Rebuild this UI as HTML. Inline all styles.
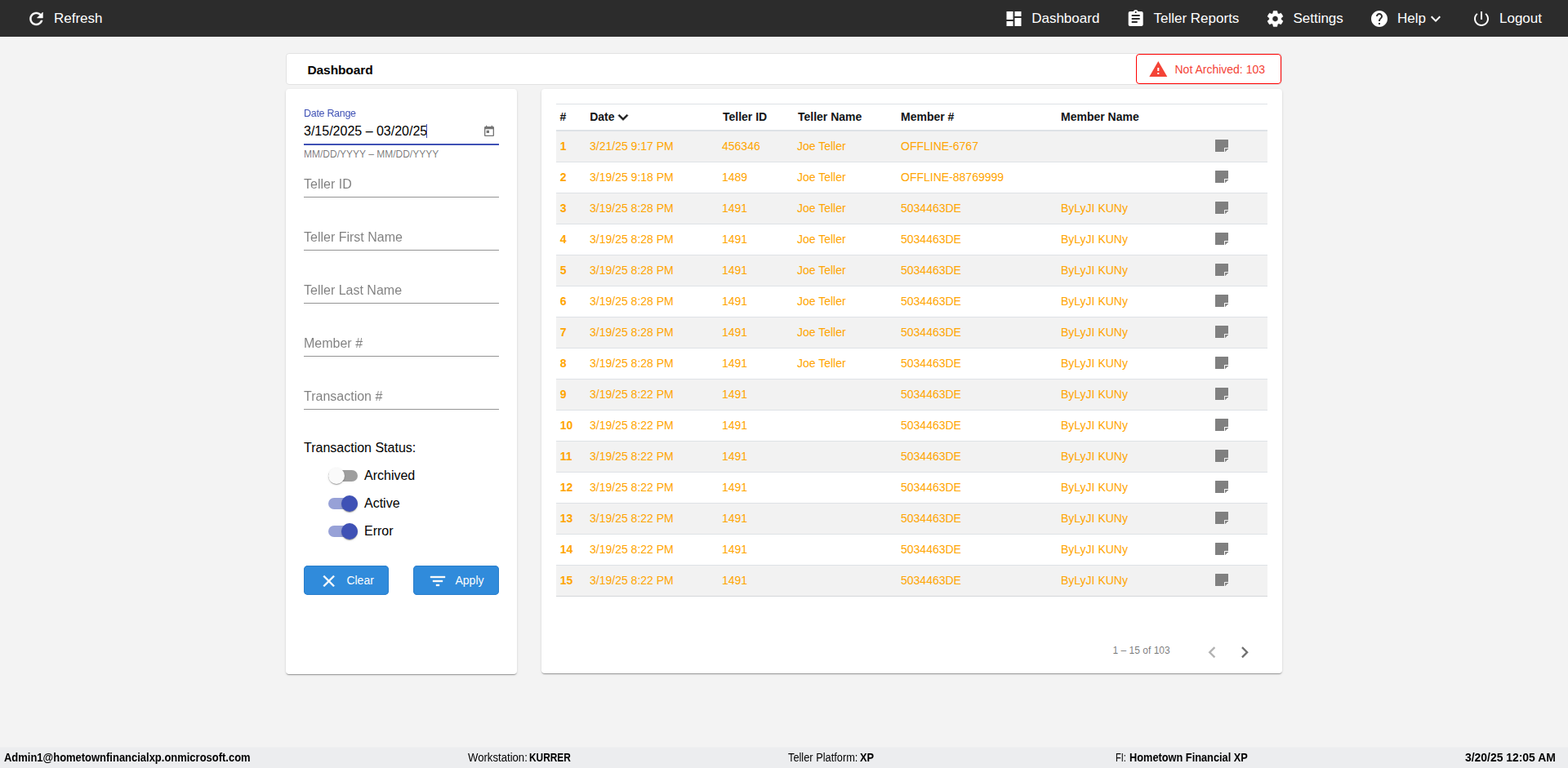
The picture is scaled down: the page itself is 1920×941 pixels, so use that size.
<!DOCTYPE html>
<html lang="en">
<head>
<meta charset="utf-8">
<title>Dashboard</title>
<style>
*{box-sizing:border-box}
svg{overflow:visible}
html,body{margin:0;padding:0}
body{width:1920px;height:941px;overflow:hidden;background:#f3f3f3;font-family:"Liberation Sans",sans-serif;color:#212529;position:relative}
#nav{position:absolute;left:0;top:0;width:1920px;height:45px;background:#2c2c2c;color:#fff;font-size:17px;line-height:45px}
#nav .it{position:absolute;top:0;height:45px;white-space:nowrap}
#nav svg{position:absolute;fill:#fff;stroke:#fff;stroke-width:0;stroke-linejoin:round}
#title{position:absolute;left:350px;top:65px;width:1220px;height:39px;background:#fff;border:1px solid #e2e2e2;border-radius:4px}
#title b{position:absolute;left:25.500px;top:1px;line-height:38px;font-size:15.500px;letter-spacing:-0.1px;color:#000}
#badge{position:absolute;left:1391px;top:66px;width:178px;height:37px;border:1px solid #f00;border-radius:4px;background:#fff;color:#f44336;font-size:14px}
#badge svg{position:absolute;fill:#f44336}
#badge span{position:absolute;left:46.500px;top:1px;line-height:35px;white-space:nowrap}
.card{position:absolute;background:#fff;border-radius:4px;box-shadow:0 2px 1px -1px rgba(0,0,0,.2),0 1px 1px 0 rgba(0,0,0,.14),0 1px 3px 0 rgba(0,0,0,.12)}
#left{left:350px;top:109px;width:283px;height:717px}
#right{left:663px;top:109px;width:907px;height:716px}
/* form */
.fld{position:absolute;left:22px;width:239px;height:40px}
.fl{position:absolute;left:0;top:15px;font-size:16px;line-height:18px;will-change:transform;color:rgba(0,0,0,.5);white-space:nowrap}
.ul{position:absolute;left:0;right:0;bottom:0;height:1px;background:rgba(0,0,0,.42)}
#dr-l{position:absolute;left:22px;top:21px;font-size:12.500px;letter-spacing:-.3px;line-height:14px;color:#3f51b5;white-space:nowrap;padding:2px 4px 4px 0;filter:blur(.3px)}
#dr-v{position:absolute;left:22px;top:42.500px;font-size:16px;line-height:18px;color:#000;white-space:nowrap}
#dr-c{position:absolute;left:172px;top:43px;width:1px;height:17px;background:#3f51b5}
#dr-u{position:absolute;left:22px;top:67px;width:239px;height:2px;background:#3f51b5}
#dr-h{position:absolute;left:22px;top:73px;font-size:12px;line-height:14px;color:rgba(0,0,0,.54);white-space:nowrap}
#dr-i{position:absolute;left:241px;top:44px;fill:rgba(0,0,0,.54)}
#ts{position:absolute;left:22px;top:431px;font-size:16px;line-height:18px;color:#000;white-space:nowrap}
.tg{position:absolute;left:52px;height:20px;width:200px}
.tg .bar{position:absolute;left:0;top:3px;width:36px;height:14px;border-radius:8px;background:rgba(0,0,0,.38)}
.tg .th{position:absolute;left:0;top:0;width:20px;height:20px;border-radius:50%;background:#fafafa;box-shadow:0 2px 1px -1px rgba(0,0,0,.2),0 1px 1px 0 rgba(0,0,0,.14),0 1px 3px 0 rgba(0,0,0,.12)}
.tg.on .bar{background:rgba(63,81,181,.54)}
.tg.on .th{left:16px;background:#3f51b5}
.tg span{position:absolute;left:44px;top:0;font-size:16px;line-height:20px;color:#000;white-space:nowrap}
.btn{position:absolute;top:584px;height:36px;border-radius:5px;background:#308bdb;color:#fdfdfd;font-size:14px;line-height:36px;box-shadow:inset 0 0 0 1px #2a7ecb}
.btn svg{position:absolute;fill:#fbfbfb;stroke:#fbfbfb;stroke-width:.35}
.btn span{position:absolute;top:0;white-space:nowrap}
/* table */
table{position:absolute;left:18px;top:18px;width:871px;border-collapse:separate;border-spacing:0;table-layout:fixed;font-size:14px;line-height:21px}
th{text-align:left;font-weight:bold;color:#121416;height:34px;padding:0 0 0 5px;border-top:1px solid #dee2e6;border-bottom:2px solid #dee2e6;vertical-align:middle;white-space:nowrap}
td{height:38px;padding:0 0 0 4px;border-bottom:1px solid #dee2e6;color:#ffa500;vertical-align:middle;white-space:nowrap}
tbody tr:nth-child(odd) td{background:#f2f2f2}
td.c0{font-weight:bold;padding-left:4.700px}
tbody tr:last-child td{border-bottom-color:#d4d6d9}
td.ci{padding:0}
.note{display:block;fill:#808080;margin-left:4px;margin-top:-2px}
th svg{position:absolute}
#pg{position:absolute;right:18px;top:661px;height:56px;width:300px;color:rgba(0,0,0,.54);font-size:12px}
#pg span{position:absolute;left:110.600px;top:-1px;line-height:56px;white-space:nowrap}
#pg svg{position:absolute}
/* footer */
#foot{position:absolute;left:0;top:915px;width:1920px;height:26px;background:#ecedef;box-shadow:inset 0 1px 0 #f0f0f1;font-size:13.800px;line-height:26.400px;color:#000}
#foot b,#foot span{position:absolute;top:1px;white-space:nowrap;transform-origin:0 50%}
</style>
</head>
<body>
<div id="nav">
  <svg viewBox="0 0 24 24" width="24" height="24" style="left:32px;top:11px;stroke-width:.5"><g transform="translate(0.4 0)"><path d="M17.65 6.35C16.2 4.9 14.21 4 12 4c-4.42 0-7.99 3.58-7.99 8s3.570 8 7.990 8c3.730 0 6.840-2.550 7.730-6h-2.080c-.82 2.330-3.040 4-5.650 4-3.310 0-6-2.690-6-6s2.690-6 6-6c1.660 0 3.140.690 4.220 1.780L13 11h7V4l-2.350 2.350z"/></g></svg>
  <div class="it" style="left:66px">Refresh</div>
  <svg viewBox="0 0 24 24" width="24" height="24" style="left:1229px;top:11px"><g transform="translate(0.5 0)"><path d="M3 13h8V3H3v10zm0 8h8v-6H3v6zm10 0h8V11h-8v10zm0-18v6h8V3h-8z"/></g></svg>
  <div class="it" style="left:1263.200px">Dashboard</div>
  <svg viewBox="0 0 24 24" width="24" height="24" style="left:1378px;top:11px"><g transform="translate(0.7 0)"><path d="M19 3h-4.180C14.400 1.840 13.300 1 12 1c-1.300 0-2.400.840-2.820 2H5c-1.100 0-2 .9-2 2v14c0 1.100.9 2 2 2h14c1.100 0 2-.9 2-2V5c0-1.100-.9-2-2-2zm-7 0c.550 0 1 .450 1 1s-.450 1-1 1-1-.450-1-1 .450-1 1-1zm2 14H7v-2h7v2zm3-4H7v-2h10v2zm0-4H7V7h10v2z"/></g></svg>
  <div class="it" style="left:1412.500px">Teller Reports</div>
  <svg viewBox="0 0 24 24" width="24" height="24" style="left:1549px;top:11px;stroke-width:.6"><g transform="translate(0.5 0)"><path d="M19.140 12.940c.040-.3.060-.610.060-.940 0-.320-.020-.640-.070-.940l2.030-1.580c.180-.140.230-.410.120-.610l-1.920-3.320c-.120-.220-.370-.290-.590-.220l-2.390.960c-.5-.380-1.030-.7-1.620-.940l-.360-2.540c-.040-.240-.240-.410-.480-.410h-3.840c-.240 0-.430.170-.470.410l-.360 2.540c-.590.240-1.130.570-1.620.940l-2.390-.960c-.220-.080-.470 0-.590.220L2.740 8.870c-.120.210-.080.470.120.610l2.030 1.580c-.050.3-.090.630-.090.940s.020.640.070.940l-2.030 1.580c-.180.140-.230.410-.120.610l1.920 3.320c.120.220.370.290.590.220l2.390-.960c.5.380 1.030.7 1.620.940l.360 2.540c.050.240.240.410.480.410h3.840c.240 0 .440-.170.470-.410l.360-2.540c.590-.240 1.130-.560 1.620-.940l2.390.960c.220.080.470 0 .590-.220l1.920-3.320c.120-.220.070-.470-.120-.610l-2.010-1.580zM12 15.600c-1.980 0-3.600-1.620-3.600-3.600s1.620-3.600 3.600-3.600 3.600 1.620 3.600 3.600-1.620 3.600-3.600 3.600z"/></g></svg>
  <div class="it" style="left:1583.400px">Settings</div>
  <svg viewBox="0 0 24 24" width="24" height="24" style="left:1677px;top:11px"><path d="M12 2C6.480 2 2 6.480 2 12s4.480 10 10 10 10-4.480 10-10S17.520 2 12 2zm1 17h-2v-2h2v2zm2.070-7.750l-.9.920C13.450 12.900 13 13.500 13 15h-2v-.5c0-1.100.450-2.100 1.170-2.830l1.240-1.260c.370-.360.590-.860.590-1.410 0-1.100-.9-2-2-2s-2 .9-2 2H8c0-2.210 1.790-4 4-4s4 1.790 4 4c0 .880-.360 1.680-.930 2.250z"/></svg>
  <div class="it" style="left:1711px">Help</div>
  <svg viewBox="0 0 24 24" width="24" height="24" style="left:1746px;top:11px"><path d="M16.590 8.590L12 13.170 7.410 8.590 6 10l6 6 6-6z"/></svg>
  <svg viewBox="0 0 24 24" width="24" height="24" style="left:1802px;top:11px"><path d="M13 3h-2v10h2V3zm4.830 2.170l-1.420 1.420C17.990 7.860 19 9.810 19 12c0 3.870-3.130 7-7 7s-7-3.130-7-7c0-2.190 1.010-4.140 2.580-5.420L6.170 5.170C4.230 6.820 3 9.260 3 12c0 4.970 4.030 9 9 9s9-4.030 9-9c0-2.740-1.230-5.180-3.170-6.830z"/></svg>
  <div class="it" style="left:1836px">Logout</div>
</div>

<div id="title"><b>Dashboard</b></div>
<div id="badge">
  <svg viewBox="0 0 24 24" width="24" height="24" style="left:14px;top:6px"><g transform="translate(0.3 0)"><path d="M1 21h22L12 2 1 21zm12-3h-2v-2h2v2zm0-4h-2v-4h2v4z"/></g></svg>
  <span>Not Archived: 103</span>
</div>

<div id="left" class="card">
  <div id="dr-l">Date Range</div>
  <div id="dr-v">3/15/2025 – 03/20/25</div>
  <i id="dr-c"></i>
  <svg id="dr-i" viewBox="0 0 24 24" width="16" height="16"><path d="M19 3h-1V1h-2v2H8V1H6v2H5c-1.110 0-1.990.9-1.990 2L3 19c0 1.100.890 2 2 2h14c1.100 0 2-.9 2-2V5c0-1.100-.9-2-2-2zm0 16H5V8h14v11zM7 10h5v5H7z"/></svg>
  <i id="dr-u"></i>
  <div id="dr-h">MM/DD/YYYY – MM/DD/YYYY</div>
  <div class="fld" style="top:93px"><span class="fl">Teller ID</span><i class="ul"></i></div>
  <div class="fld" style="top:158px"><span class="fl">Teller First Name</span><i class="ul"></i></div>
  <div class="fld" style="top:223px"><span class="fl">Teller Last Name</span><i class="ul"></i></div>
  <div class="fld" style="top:288px"><span class="fl">Member #</span><i class="ul"></i></div>
  <div class="fld" style="top:353px"><span class="fl">Transaction #</span><i class="ul"></i></div>
  <div id="ts">Transaction Status:</div>
  <div class="tg" style="top:464px"><i class="bar"></i><i class="th"></i><span>Archived</span></div>
  <div class="tg on" style="top:498px"><i class="bar"></i><i class="th"></i><span>Active</span></div>
  <div class="tg on" style="top:532px"><i class="bar"></i><i class="th"></i><span>Error</span></div>
  <div class="btn" style="left:22px;width:104px">
    <svg viewBox="0 0 24 24" width="24" height="24" style="left:18px;top:7px"><g transform="translate(0.7 0)"><path d="M19 6.410L17.590 5 12 10.590 6.410 5 5 6.410 10.590 12 5 17.590 6.410 19 12 13.410 17.590 19 19 17.590 13.410 12z"/></g></svg>
    <span style="left:52.400px">Clear</span>
  </div>
  <div class="btn" style="left:156px;width:105px">
    <svg viewBox="0 0 24 24" width="24" height="24" style="left:18px;top:7px"><path d="M10 18h4v-2h-4v2zM3 6v2h18V6H3zm3 7h12v-2H6v2z"/></svg>
    <span style="left:51.500px">Apply</span>
  </div>
</div>

<div id="right" class="card">
  <table>
    <colgroup><col style="width:37px"><col style="width:162px"><col style="width:92px"><col style="width:127px"><col style="width:196px"><col style="width:189px"><col style="width:68px"></colgroup>
    <thead><tr><th style="padding-left:4.600px">#</th><th style="padding-left:4.200px;position:relative">Date<svg viewBox="0 0 12 8" width="12" height="8" style="left:39px;top:12px"><g transform="translate(0 0.2)"><path d="M1.410 0L6 4.590 10.590 0 12 1.410l-6 6-6-6z" fill="#1c1c1c" stroke="#1c1c1c" stroke-width=".6"/></g></svg></th><th>Teller ID</th><th>Teller Name</th><th style="padding-left:4px">Member #</th><th style="padding-left:4px">Member Name</th><th></th></tr></thead>
    <tbody>
<tr><td class="c0">1</td><td>3/21/25 9:17 PM</td><td>456346</td><td>Joe Teller</td><td>OFFLINE-6767</td><td></td><td class="ci"><svg class="note" viewBox="0 0 16 15" width="16" height="15"><path d="M.5 0h15a.5.5 0 0 1 .5.5V10h-4.500a.5.5 0 0 0-.5.5V15H.5a.5.5 0 0 1-.5-.5V.5A.5.5 0 0 1 .5 0z"/><path d="M12 11h4v.3l-3.700 3.700H12z"/></svg></td></tr>
<tr><td class="c0">2</td><td>3/19/25 9:18 PM</td><td>1489</td><td>Joe Teller</td><td>OFFLINE-88769999</td><td></td><td class="ci"><svg class="note" viewBox="0 0 16 15" width="16" height="15"><path d="M.5 0h15a.5.5 0 0 1 .5.5V10h-4.500a.5.5 0 0 0-.5.5V15H.5a.5.5 0 0 1-.5-.5V.5A.5.5 0 0 1 .5 0z"/><path d="M12 11h4v.3l-3.700 3.700H12z"/></svg></td></tr>
<tr><td class="c0">3</td><td>3/19/25 8:28 PM</td><td>1491</td><td>Joe Teller</td><td>5034463DE</td><td>ByLyJI KUNy</td><td class="ci"><svg class="note" viewBox="0 0 16 15" width="16" height="15"><path d="M.5 0h15a.5.5 0 0 1 .5.5V10h-4.500a.5.5 0 0 0-.5.5V15H.5a.5.5 0 0 1-.5-.5V.5A.5.5 0 0 1 .5 0z"/><path d="M12 11h4v.3l-3.700 3.700H12z"/></svg></td></tr>
<tr><td class="c0">4</td><td>3/19/25 8:28 PM</td><td>1491</td><td>Joe Teller</td><td>5034463DE</td><td>ByLyJI KUNy</td><td class="ci"><svg class="note" viewBox="0 0 16 15" width="16" height="15"><path d="M.5 0h15a.5.5 0 0 1 .5.5V10h-4.500a.5.5 0 0 0-.5.5V15H.5a.5.5 0 0 1-.5-.5V.5A.5.5 0 0 1 .5 0z"/><path d="M12 11h4v.3l-3.700 3.700H12z"/></svg></td></tr>
<tr><td class="c0">5</td><td>3/19/25 8:28 PM</td><td>1491</td><td>Joe Teller</td><td>5034463DE</td><td>ByLyJI KUNy</td><td class="ci"><svg class="note" viewBox="0 0 16 15" width="16" height="15"><path d="M.5 0h15a.5.5 0 0 1 .5.5V10h-4.500a.5.5 0 0 0-.5.5V15H.5a.5.5 0 0 1-.5-.5V.5A.5.5 0 0 1 .5 0z"/><path d="M12 11h4v.3l-3.700 3.700H12z"/></svg></td></tr>
<tr><td class="c0">6</td><td>3/19/25 8:28 PM</td><td>1491</td><td>Joe Teller</td><td>5034463DE</td><td>ByLyJI KUNy</td><td class="ci"><svg class="note" viewBox="0 0 16 15" width="16" height="15"><path d="M.5 0h15a.5.5 0 0 1 .5.5V10h-4.500a.5.5 0 0 0-.5.5V15H.5a.5.5 0 0 1-.5-.5V.5A.5.5 0 0 1 .5 0z"/><path d="M12 11h4v.3l-3.700 3.700H12z"/></svg></td></tr>
<tr><td class="c0">7</td><td>3/19/25 8:28 PM</td><td>1491</td><td>Joe Teller</td><td>5034463DE</td><td>ByLyJI KUNy</td><td class="ci"><svg class="note" viewBox="0 0 16 15" width="16" height="15"><path d="M.5 0h15a.5.5 0 0 1 .5.5V10h-4.500a.5.5 0 0 0-.5.5V15H.5a.5.5 0 0 1-.5-.5V.5A.5.5 0 0 1 .5 0z"/><path d="M12 11h4v.3l-3.700 3.700H12z"/></svg></td></tr>
<tr><td class="c0">8</td><td>3/19/25 8:28 PM</td><td>1491</td><td>Joe Teller</td><td>5034463DE</td><td>ByLyJI KUNy</td><td class="ci"><svg class="note" viewBox="0 0 16 15" width="16" height="15"><path d="M.5 0h15a.5.5 0 0 1 .5.5V10h-4.500a.5.5 0 0 0-.5.5V15H.5a.5.5 0 0 1-.5-.5V.5A.5.5 0 0 1 .5 0z"/><path d="M12 11h4v.3l-3.700 3.700H12z"/></svg></td></tr>
<tr><td class="c0">9</td><td>3/19/25 8:22 PM</td><td>1491</td><td></td><td>5034463DE</td><td>ByLyJI KUNy</td><td class="ci"><svg class="note" viewBox="0 0 16 15" width="16" height="15"><path d="M.5 0h15a.5.5 0 0 1 .5.5V10h-4.500a.5.5 0 0 0-.5.5V15H.5a.5.5 0 0 1-.5-.5V.5A.5.5 0 0 1 .5 0z"/><path d="M12 11h4v.3l-3.700 3.700H12z"/></svg></td></tr>
<tr><td class="c0">10</td><td>3/19/25 8:22 PM</td><td>1491</td><td></td><td>5034463DE</td><td>ByLyJI KUNy</td><td class="ci"><svg class="note" viewBox="0 0 16 15" width="16" height="15"><path d="M.5 0h15a.5.5 0 0 1 .5.5V10h-4.500a.5.5 0 0 0-.5.5V15H.5a.5.5 0 0 1-.5-.5V.5A.5.5 0 0 1 .5 0z"/><path d="M12 11h4v.3l-3.700 3.700H12z"/></svg></td></tr>
<tr><td class="c0">11</td><td>3/19/25 8:22 PM</td><td>1491</td><td></td><td>5034463DE</td><td>ByLyJI KUNy</td><td class="ci"><svg class="note" viewBox="0 0 16 15" width="16" height="15"><path d="M.5 0h15a.5.5 0 0 1 .5.5V10h-4.500a.5.5 0 0 0-.5.5V15H.5a.5.5 0 0 1-.5-.5V.5A.5.5 0 0 1 .5 0z"/><path d="M12 11h4v.3l-3.700 3.700H12z"/></svg></td></tr>
<tr><td class="c0">12</td><td>3/19/25 8:22 PM</td><td>1491</td><td></td><td>5034463DE</td><td>ByLyJI KUNy</td><td class="ci"><svg class="note" viewBox="0 0 16 15" width="16" height="15"><path d="M.5 0h15a.5.5 0 0 1 .5.5V10h-4.500a.5.5 0 0 0-.5.5V15H.5a.5.5 0 0 1-.5-.5V.5A.5.5 0 0 1 .5 0z"/><path d="M12 11h4v.3l-3.700 3.700H12z"/></svg></td></tr>
<tr><td class="c0">13</td><td>3/19/25 8:22 PM</td><td>1491</td><td></td><td>5034463DE</td><td>ByLyJI KUNy</td><td class="ci"><svg class="note" viewBox="0 0 16 15" width="16" height="15"><path d="M.5 0h15a.5.5 0 0 1 .5.5V10h-4.500a.5.5 0 0 0-.5.5V15H.5a.5.5 0 0 1-.5-.5V.5A.5.5 0 0 1 .5 0z"/><path d="M12 11h4v.3l-3.700 3.700H12z"/></svg></td></tr>
<tr><td class="c0">14</td><td>3/19/25 8:22 PM</td><td>1491</td><td></td><td>5034463DE</td><td>ByLyJI KUNy</td><td class="ci"><svg class="note" viewBox="0 0 16 15" width="16" height="15"><path d="M.5 0h15a.5.5 0 0 1 .5.5V10h-4.500a.5.5 0 0 0-.5.5V15H.5a.5.5 0 0 1-.5-.5V.5A.5.5 0 0 1 .5 0z"/><path d="M12 11h4v.3l-3.700 3.700H12z"/></svg></td></tr>
<tr><td class="c0">15</td><td>3/19/25 8:22 PM</td><td>1491</td><td></td><td>5034463DE</td><td>ByLyJI KUNy</td><td class="ci"><svg class="note" viewBox="0 0 16 15" width="16" height="15"><path d="M.5 0h15a.5.5 0 0 1 .5.5V10h-4.500a.5.5 0 0 0-.5.5V15H.5a.5.5 0 0 1-.5-.5V.5A.5.5 0 0 1 .5 0z"/><path d="M12 11h4v.3l-3.700 3.700H12z"/></svg></td></tr>
    </tbody>
  </table>
  <div id="pg">
    <span>1 – 15 of 103</span>
    <svg viewBox="0 0 24 24" width="28" height="28" style="left:218px;top:15px;fill:rgba(0,0,0,.3)"><g transform="translate(0.214 0.214)"><path d="M15.410 7.410L14 6l-6 6 6 6 1.410-1.410L10.830 12z"/></g></svg>
    <svg viewBox="0 0 24 24" width="28" height="28" style="left:258px;top:15px;fill:rgba(0,0,0,.56)"><g transform="translate(0.0857 0.214)"><path d="M10 6L8.590 7.410 13.170 12l-4.580 4.590L10 18l6-6z"/></g></svg>
  </div>
</div>

<div id="foot">
  <b style="left:5px;transform:scaleX(.94)">Admin1@hometownfinancialxp.onmicrosoft.com</b>
  <span style="left:572.500px;transform:scaleX(.953)">Workstation:</span>
  <b style="left:648.300px;transform:scaleX(.862)">KURRER</b>
  <span style="left:965px;transform:scaleX(.928)">Teller Platform:</span>
  <b style="left:1053.300px;transform:scaleX(.93)">XP</b>
  <span style="left:1365.800px;transform:scaleX(.8)">FI:</span>
  <b style="left:1382.600px;transform:scaleX(.926)">Hometown Financial XP</b>
  <b style="left:1794.200px;transform:scaleX(1.008)">3/20/25 12:05 AM</b>
</div>
</body>
</html>
